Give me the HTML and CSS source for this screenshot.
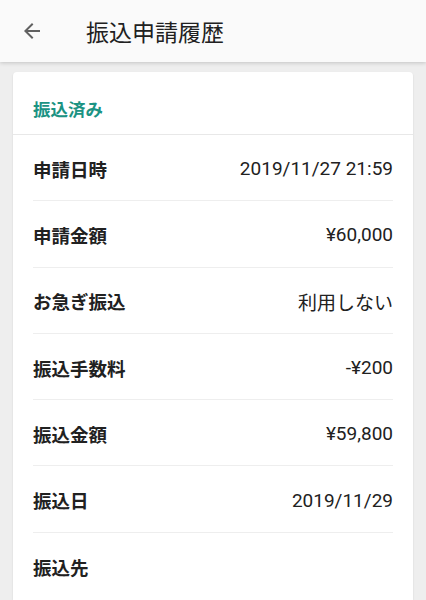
FILE: index.html
```html
<!DOCTYPE html>
<html lang="ja">
<head>
<meta charset="utf-8">
<link rel="stylesheet" href="styles.css">
</head>
<body>
<header class="appbar">
  <svg class="back" width="24" height="24" viewBox="0 0 24 24"><path d="M20 11H7.83l5.59-5.59L12 4l-8 8 8 8 1.41-1.41L7.83 13H20v-2z" fill="#616161"/></svg>
  <h1 class="title">振込申請履歴</h1>
</header>
<main class="content">
  <section class="card">
    <div class="card-head">振込済み</div>
    <div class="rows">
      <div class="row"><span class="label">申請日時</span><span class="value">2019/11/27 21:59</span></div>
      <div class="row"><span class="label">申請金額</span><span class="value">¥60,000</span></div>
      <div class="row"><span class="label">お急ぎ振込</span><span class="value">利用しない</span></div>
      <div class="row"><span class="label">振込手数料</span><span class="value">-¥200</span></div>
      <div class="row"><span class="label">振込金額</span><span class="value">¥59,800</span></div>
      <div class="row"><span class="label">振込日</span><span class="value">2019/11/29</span></div>
      <div class="row last"><span class="label">振込先</span><span class="value"></span></div>
    </div>
  </section>
</main>
</body>
</html>
```
FILE: styles.css
```css
* { box-sizing: border-box; }
html, body { margin: 0; padding: 0; }
body {
  background: #eeeeee;
  font-family: Roboto, "Noto Sans CJK JP", sans-serif;
  color: #212121;
  width: 426px;
  height: 600px;
  overflow: hidden;
}
.appbar {
  height: 62px;
  background: #fafafa;
  display: flex;
  align-items: center;
  padding-left: 20px;
  box-shadow: 0 1px 4px rgba(0,0,0,0.18);
  position: relative;
  z-index: 1;
}
.back { width: 24px; height: 24px; flex: none; }
.title {
  margin: 0 0 0 42px;
  font-family: "Noto Sans CJK JP", sans-serif;
  font-weight: 400;
  font-size: 23px;
  color: #212121;
  line-height: 1;
}
.content {
  height: 538px;
  padding: 10px 13px 0;
  display: flex;
  flex-direction: column;
}
.card {
  flex: 1;
  background: #ffffff;
  border-radius: 4px 4px 0 0;
  box-shadow: 0 1px 2px rgba(0,0,0,0.12);
  overflow: hidden;
}
.card-head {
  height: 63px;
  border-bottom: 1px solid #e8e8e8;
  padding: 28px 20px 0;
  font-family: "Noto Sans CJK JP", sans-serif;
  font-weight: 700;
  font-size: 17.5px;
  line-height: 1;
  color: #1b9383;
}
.rows { padding: 0 20px; }
.row {
  height: 66.3px;
  display: flex;
  align-items: center;
  justify-content: space-between;
  border-bottom: 1px solid #eeeeee;
  padding-top: 2px;
}
.row.last { border-bottom: 0; }
.label {
  font-family: "Noto Sans CJK JP", sans-serif;
  font-weight: 700;
  font-size: 18.5px;
  color: #212121;
}
.value {
  font-family: Roboto, "Noto Sans CJK JP", sans-serif;
  font-size: 19px;
  color: #212121;
}
```
